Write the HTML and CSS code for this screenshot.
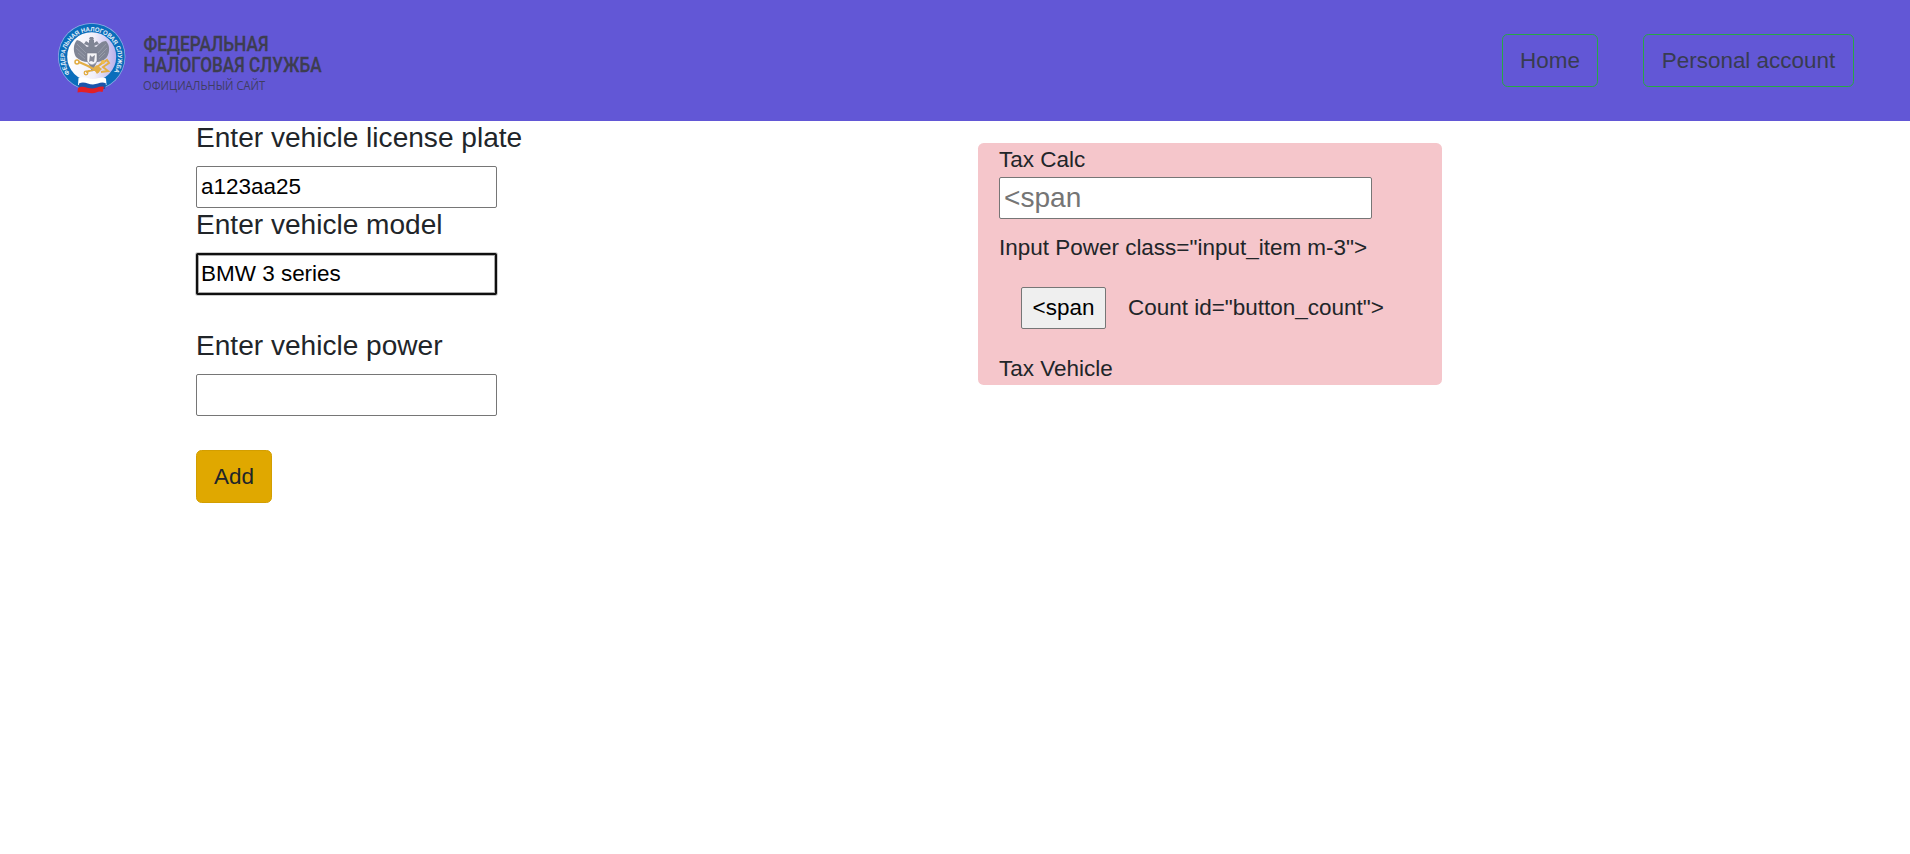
FILE: index.html
```html
<!DOCTYPE html>
<html lang="en">
<head>
<meta charset="utf-8">
<title>Tax Calc</title>
<link rel="stylesheet" href="styles.css">
</head>
<body>
<header class="header">
  <svg class="logo" width="290" height="78" viewBox="50 17 290 78" role="img">
    <defs>
      <path id="ring" d="M70 73.500A26.500 26.500 0 1 1 111.500 75"/>
      <linearGradient id="disc" x1="0" x2="1"><stop offset="0" stop-color="#fff"/><stop offset=".55" stop-color="#f1effa"/><stop offset="1" stop-color="#b9b0ea"/></linearGradient>
    </defs>
    <circle cx="91.700" cy="56.700" r="33.700" fill="#8fb3e6"/>
    <circle cx="91.700" cy="56.700" r="33" fill="#0a6dbb"/>
    <circle cx="91.700" cy="56.700" r="24.500" fill="url(#disc)"/>
    <text class="logo-ring"><textPath href="#ring" textLength="114" lengthAdjust="spacingAndGlyphs">ФЕДЕРАЛЬНАЯ НАЛОГОВАЯ СЛУЖБА</textPath></text>
    <g fill="#808595">
      <path d="M87 47C84 44 81 41 77 40C73 44 73 52 76 57C79 60 84 62 88 62L92 66L96 62C100 62 105 60 107 57C110 52 110 45 106 41C102 41 99 44 96 47L94 46L99 44L97 41L94 43V40H89V43L86 41L84 44L89 46Z"/>
      <path d="M89 39L90 37H93L94 39L92 41Z"/>
      <path d="M88 62L92 72L97 62Z"/>
    </g>
    <path d="M77 44L86 53M76 48L85 56M78 53L85 59M106 44L98 53M107 48L99 56M105 53L99 59" stroke="#a5a9b6" stroke-width=".6" fill="none"/>
    <path d="M87 53H97V61Q96 64 92 65Q88 64 87 61Z" fill="#f5f5f8" stroke="#777b8b" stroke-width=".6"/>
    <path d="M90 55L92 57L95 55L94 62L91 61L89 62Z" fill="#888b9a"/>
    <path d="M79 62L88 66L99 72M103 62L95 69L86 72M97 67L107 60L109 63L103 67L108 71L101 72" fill="none" stroke="#e3ae46" stroke-width="2"/>
    <path d="M93 68L97 65L102 69L97 74Z" fill="#e3ae46"/>
    <circle cx="77" cy="62" r="2" fill="none" stroke="#e0aa3f" stroke-width="1.500"/>
    <circle cx="103" cy="62" r="2" fill="#efbd4c"/>
    <circle cx="86" cy="73" r="1.800" fill="none" stroke="#e0aa3f" stroke-width="1.300"/>
    <path d="M78.500 78C84 76 88 79 93 79C98 79 102 76 106 78.500L106.500 85L78 85Z" fill="#fff"/>
    <path d="M79 83.500C84 80.500 88 84.500 93 84.500C98 84.500 101 81 106 83.500L105 89H78.500Z" fill="#1b55ab"/>
    <path d="M78 88C83 84.500 88 89 93 88.500C97 88.500 99 85.500 104 87L102.500 92C98 90 96 93.500 92 93.300C87 93 82 91 77.500 92.500Z" fill="#e21f27"/>
    <text class="logo-title" x="143.500" y="50.500" textLength="125" lengthAdjust="spacingAndGlyphs">ФЕДЕРАЛЬНАЯ</text>
    <text class="logo-title" x="143.500" y="72" textLength="178" lengthAdjust="spacingAndGlyphs">НАЛОГОВАЯ СЛУЖБА</text>
    <text class="logo-sub" x="143" y="89.500" textLength="122" lengthAdjust="spacingAndGlyphs">ОФИЦИАЛЬНЫЙ САЙТ</text>
  </svg>
  <nav class="nav">
    <a class="nav-link nav-home">Home</a>
    <a class="nav-link nav-account">Personal account</a>
  </nav>
</header>
<main class="main">
  <form class="vehicle">
    <label class="label">Enter vehicle license plate</label>
    <input class="field" type="text" value="a123aa25">
    <label class="label">Enter vehicle model</label>
    <input class="field field-active" type="text" value="BMW 3 series">
    <label class="label label-spaced">Enter vehicle power</label>
    <input class="field" type="text">
    <button class="add" type="button">Add</button>
  </form>
  <section class="calc">
    <div class="calc-title">Tax Calc</div>
    <input class="field calc-field" type="text" placeholder="&lt;span">
    <div class="calc-power">Input Power class="input_item m-3"&gt;</div>
    <div class="calc-row">
      <button class="count" type="button">&lt;span</button>
      <span class="count-text">Count id="button_count"&gt;</span>
    </div>
    <div class="calc-total">Tax Vehicle</div>
  </section>
</main>
</body>
</html>
```
FILE: styles.css
```css
* { box-sizing: border-box; }
body {
  margin: 0;
  background: #fff;
  color: #212529;
  font-family: "Liberation Sans", Arial, sans-serif;
  font-size: 22.47px;
  line-height: 33px;
}
.header {
  display: flex;
  justify-content: space-between;
  align-items: center;
  height: 121px;
  padding: 0 56px 0 50px;
  background: #6257d6;
}
.logo { display: block; margin-bottom: 9px; overflow: visible; }
.logo-ring { font: bold 6.4px "Liberation Sans", Arial, sans-serif; fill: #e4effa; }
.logo-title { font: 500 20.5px Roboto, sans-serif; fill: #3d3d50; stroke: #3d3d50; stroke-width: .3px; }
.logo-sub { font: 12.5px "Open Sans", sans-serif; fill: #3f3d62; }
.nav { display: flex; gap: 45px; }
.nav-link {
  height: 53px;
  padding: 9px 0;
  border: 1px solid #28a745;
  border-radius: 5.6px;
  color: #383c50;
  text-align: center;
  white-space: nowrap;
}
.nav-home { width: 96px; }
.nav-account { width: 211px; }
.main {
  display: grid;
  grid-template-columns: 782px 464px;
  align-items: start;
  padding-left: 196px;
}
.vehicle { display: flex; flex-direction: column; align-items: flex-start; }
.label { margin-bottom: 12px; font-size: 28.08px; line-height: 33px; }
.label-spaced { margin-top: 34px; }
.field {
  width: 301px;
  height: 42px;
  margin: 0;
  padding: 1px 4px;
  border: 1px solid #767676;
  border-radius: 2px;
  background: #fff;
  color: #000;
  font: 22.47px "Liberation Sans", Arial, sans-serif;
}
.field-active {
  outline: 2px solid #101010;
  outline-offset: -2px;
  box-shadow: inset 0 0 0 2px #aaa, 0 0 0 1px #ccc;
}
.add {
  width: 76px;
  height: 53px;
  margin-top: 34px;
  padding: 0;
  border: 1px solid #d39e00;
  border-radius: 5.6px;
  background: #e0a800;
  color: #212529;
  font: 22.47px "Liberation Sans", Arial, sans-serif;
}
.calc {
  height: 242px;
  margin-top: 22px;
  padding-left: 21px;
  border-radius: 5.6px;
  background: #f5c6cb;
}
.calc-title { height: 34px; }
.calc-field { display: block; width: 373px; font-size: 28.08px; }
.calc-field::placeholder { color: #757575; opacity: 1; }
.calc-power { margin-top: 12px; }
.calc-row { display: flex; align-items: center; gap: 22px; margin: 23px 0 0 22px; }
.count {
  width: 85px;
  height: 42px;
  padding: 0;
  border: 1px solid #767676;
  border-radius: 2px;
  background: #efefef;
  color: #000;
  font: 22.47px "Liberation Sans", Arial, sans-serif;
}
.count-text { margin-bottom: 2px; }
.calc-total { margin-top: 23px; }
```
